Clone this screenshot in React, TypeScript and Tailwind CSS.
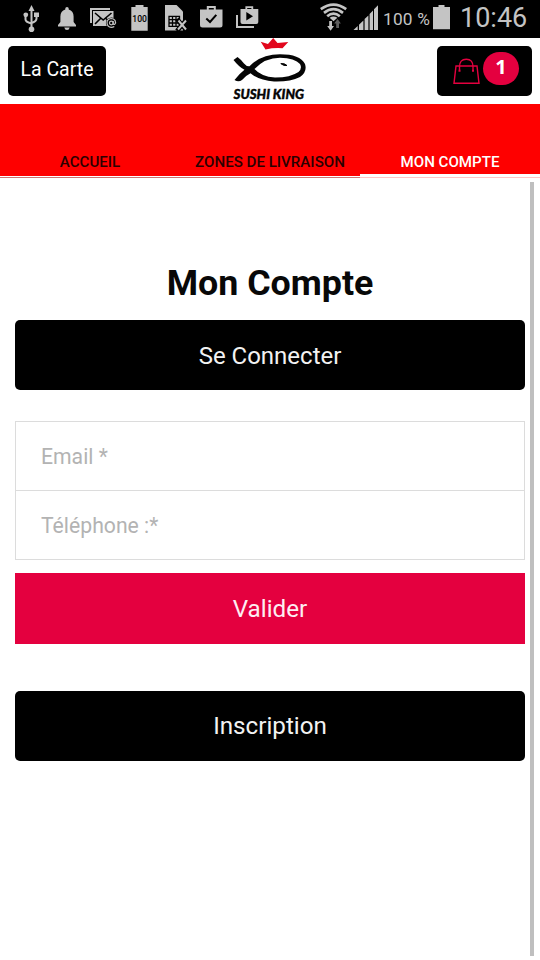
import type { ReactNode } from 'react';

const FIELDS = [
  { name: 'email', type: 'email', label: 'Email *' },
  { name: 'phone', type: 'tel', label: 'Téléphone :*' },
];

const TABS = [
  { label: 'ACCUEIL', active: false },
  { label: 'ZONES DE LIVRAISON', active: false },
  { label: 'MON COMPTE', active: true },
];

function StatusIcon({ width, className = '', children }: { width: number; className?: string; children: ReactNode }) {
  return (
    <svg width={width} height="38" viewBox={`0 0 ${width} 38`} fill="none" className={`shrink-0 ${className}`}>
      {children}
    </svg>
  );
}

function StatusBar() {
  return (
    <div className="flex h-[38px] bg-black pl-[23px] text-[#c4c4c4]">
      {/* USB */}
      <StatusIcon width={17}>
        <path d="M8.5 9V29M2.5 16V19.5Q2.5 22 8.5 23.5M13.5 16V18.5Q13.5 21.5 8.5 23" stroke="currentColor" strokeWidth="2" />
        <path d="M8.5 5L11.5 11H5.5Z" fill="currentColor" />
        <circle cx="2.8" cy="14.8" r="2.4" fill="currentColor" />
        <rect x="11" y="12.5" width="5" height="4.5" fill="currentColor" />
        <circle cx="8.5" cy="29.2" r="2.8" fill="currentColor" />
      </StatusIcon>
      {/* Alarm bell */}
      <StatusIcon width={18} className="ml-[18px]">
        <path d="M7.3 9.5V8.5Q7.3 7 9 7T10.7 8.5V9.5Q15.6 11 15.6 16.5V22L18 25V26.5H0V25L2.4 22V16.5Q2.4 11 7.3 9.5ZM6.3 27.5H11.7Q11.2 30 9 30T6.3 27.5Z" fill="currentColor" />
      </StatusIcon>
      {/* Mail */}
      <StatusIcon width={27} className="ml-[14px]">
        <path d="M0 8H20V10H2V23H0Z" fill="currentColor" />
        <rect x="3" y="11" width="20.5" height="15" fill="currentColor" />
        <path d="M5 13L13.2 20L21.5 13M5 24L10.5 18.5M21.5 24L16 18.5" stroke="#000" strokeWidth="1.6" />
        <circle cx="21.5" cy="23" r="5.6" fill="#000" />
        <circle cx="21.3" cy="23" r="1.8" stroke="currentColor" strokeWidth="1.2" />
        <path d="M23.2 21V23.5Q23.5 25 24.8 24.2Q26.2 22.7 25 20.3Q23.7 18.5 21.2 18.5Q17 19 17 23Q17.3 27 21.3 27.3Q23 27.3 24.3 26.5" stroke="currentColor" strokeWidth="1.2" />
      </StatusIcon>
      {/* Battery level notification */}
      <StatusIcon width={17} className="ml-[14px]">
        <path d="M0.3 7H4.5V5H12.5V7H16.7V30.7H0.3Z" fill="currentColor" />
        <text x="8.6" y="22.4" textAnchor="middle" fontSize="8.6" fontWeight="500" fill="#000" className="font-['Roboto',sans-serif]">
          100
        </text>
      </StatusIcon>
      {/* SIM card missing */}
      <StatusIcon width={22} className="ml-[17px]">
        <path d="M0 5H11.5L18 11.5V30.5H0Z" fill="currentColor" />
        <path d="M4 16.3H14.5V26.3H4ZM4 19.7H14.5M4 23H14.5M7.5 16V26.5M11 16V26.5" stroke="#000" strokeWidth="1.3" />
        <path d="M12 19L22 31M22 19L12 31" stroke="#000" strokeWidth="4.6" />
        <path d="M13.5 20.5L21 29.5M21 20.5L13 29.5" stroke="currentColor" strokeWidth="2" />
      </StatusIcon>
      {/* App update installed */}
      <StatusIcon width={23} className="ml-[13px]">
        <path d="M7.8 11V7H14.8V11" stroke="currentColor" strokeWidth="2" />
        <path d="M0 9.5H22.5V25Q22.5 27.5 20 27.5H2.5Q0 27.5 0 25Z" fill="currentColor" />
        <path d="M6.3 18.5L10 22L16.3 14.8" stroke="#000" strokeWidth="2" />
      </StatusIcon>
      {/* Store */}
      <StatusIcon width={23} className="ml-[13px]">
        <path d="M1 15V27H18" stroke="currentColor" strokeWidth="2" />
        <path d="M10.3 10V7.2H16.3V10" stroke="currentColor" strokeWidth="1.8" />
        <path d="M4.5 9H22.3V22Q22.3 24 20.3 24H6.5Q4.5 24 4.5 22Z" fill="currentColor" />
        <path d="M10.3 12L17 16.3L10.3 20.5Z" fill="#000" />
      </StatusIcon>

      {/* Wifi */}
      <StatusIcon width={28} className="ml-[61px]">
        <path d="M0.8 9.2Q13.5 0.2 26.2 9.2M4 12.8Q13.5 5.6 23 12.8M7.2 16.2Q13.5 11 19.8 16.2" stroke="currentColor" strokeWidth="2.7" />
        <path d="M9.6 17.8Q13.5 15 17.4 17.8L13.5 21.2Z" fill="currentColor" />
        <path d="M9.2 21H12V26H14L10.6 30.7L7.2 26H9.2Z" fill="currentColor" />
        <path d="M17.5 19L20.9 23.5H19V28H16.2V23.5H14.2Z" fill="#5e5e5e" />
      </StatusIcon>
      {/* Signal strength */}
      <StatusIcon width={26} className="ml-[5px]">
        <path d="M0.5 30L4.7 26V30ZM6 24.7L10.4 20.4V30H6ZM11.6 19L15.4 15.4V30H11.6ZM16.6 14L20 10.6V30H16.6ZM21 9.3L25 5.3V30H21Z" fill="currentColor" />
      </StatusIcon>
      <span className="ml-1 w-[50px] whitespace-nowrap text-[17.3px] leading-[38px] tracking-[0.2px]">100 %</span>
      <StatusIcon width={17}>
        <path d="M0 7H5.5V5H11.5V7H17V29.3H0Z" fill="currentColor" />
      </StatusIcon>
      <span className="ml-[10px] whitespace-nowrap text-[27px] leading-[37px]">10:46</span>
    </div>
  );
}

function Logo() {
  return (
    <svg width="80" height="66" viewBox="0 0 80 66" fill="none">
      {/* crown */}
      <path d="M30.7 3.8L38 6L43.2 0L47.5 5L58.3 4L52.5 10.3Q44 9.6 35.5 11.6Z" fill="#e2061c" />
      {/* fish */}
      <path
        fillRule="evenodd"
        d="M3.5 22L7.5 19Q11 21.5 14 25.5Q16.5 28.6 19.5 28.3Q31 16.3 50 16.3Q70 16.3 75 26Q77.5 34 70 39Q60 44 44 43.5Q29 42.5 20.5 35.3Q16 37.5 12 42Q8.5 44.5 4.5 42Q9 36 14.5 31.8Q9 29 3.5 22ZM24.5 31Q31 38.5 45 39.6Q60 39.7 68.5 34Q72.5 30.5 70 26Q65 20 50 19.7Q35 19.7 24.5 31Z"
        fill="#050505"
      />
      <path d="M50.8 25.6Q54.5 25 57 27.5Q53.6 28.2 50.8 25.6Z" fill="#050505" stroke="#050505" />
      <text
        x="3.5"
        y="60.8"
        textLength="70.5"
        lengthAdjust="spacingAndGlyphs"
        fontSize="14"
        fontWeight="900"
        fontStyle="italic"
        fill="#050505"
        stroke="#050505"
        strokeWidth="0.4"
        className="font-['Lato',sans-serif]"
      >
        SUSHI KING
      </text>
    </svg>
  );
}

function Header() {
  return (
    <header className="flex h-[66px] items-start justify-between bg-white pl-2 pr-2">
      <div className="flex flex-1">
        <button className="mt-2 h-[50px] w-[98px] rounded-[5px] bg-black pb-[3px] text-[19.5px] text-white">La Carte</button>
      </div>
      <Logo />
      <div className="flex flex-1 justify-end">
        <button className="mt-2 flex h-[50px] w-[95px] items-center rounded-[5px] bg-black pl-[16px]">
          <svg width="27" height="28" viewBox="0 0 27 28" fill="none" stroke="#e4003f" strokeWidth="1.4">
            <path d="M3 9H24L26 26.3H1Z" />
            <path d="M6.5 13V10Q6.5 2.2 13.3 2.2T20 10V13" />
            <path d="M5.5 13.8H7.5M19 13.8H21" strokeWidth="2" />
          </svg>
          <span className="-mt-[5px] ml-[3px] flex h-[33px] w-[36px] items-center justify-center rounded-full bg-[#e4003f] pb-[3px] font-['Open_Sans',sans-serif] text-[20px] font-bold text-white">
            1
          </span>
        </button>
      </div>
    </header>
  );
}

function Tabs() {
  return (
    <nav className="flex h-[74px] bg-[#fe0000]">
      {TABS.map((tab) => (
        <div
          key={tab.label}
          className={`flex flex-1 flex-col items-center justify-end whitespace-nowrap border-b text-[15.1px] font-medium leading-[18px] ${
            tab.active ? 'border-[#ffc4c4] text-white' : 'border-[#cc7373] text-[#2b0000]'
          }`}
        >
          {tab.label}
          <div className={`w-full bg-white ${tab.active ? 'mt-[3px] h-[3px]' : 'mt-[5px] h-px'}`} />
        </div>
      ))}
    </nav>
  );
}

export default function App() {
  return (
    <div className="flex h-[960px] w-[540px] flex-col overflow-hidden bg-white font-['Roboto',sans-serif]">
      <StatusBar />
      <Header />
      <Tabs />

      <div className="flex flex-1 pb-1 pt-1">
        <main className="flex w-[530px] flex-col pl-[15px] pr-[5px]">
          <h1 className="mt-[77px] text-center text-[35.8px] font-bold leading-[48px] text-[#080808]">Mon Compte</h1>
          <button className="mt-[13px] h-[70px] shrink-0 rounded-[5px] bg-black pt-px text-[24px] text-[#f2f2f2]">Se Connecter</button>

          <form className="mt-[31px] flex flex-col">
            {FIELDS.map((field) => (
              <input
                key={field.name}
                type={field.type}
                placeholder={field.label}
                className="-mb-px h-[70px] border border-[#dcdcdc] px-[25px] text-[21.2px] placeholder:text-[#b3b3b3] focus:outline-none"
              />
            ))}
            <button type="button" className="mt-[14px] h-[71px] bg-[#e4003f] pt-px text-[24.2px] text-[#fdeef2]">
              Valider
            </button>
          </form>

          <button className="mt-[47px] h-[70px] shrink-0 rounded-[5px] bg-black text-[24.2px] text-[#f2f2f2]">Inscription</button>
        </main>
        {/* Scrollbar */}
        <div className="w-[4px] bg-[#bfbfbf]" />
      </div>
    </div>
  );
}
